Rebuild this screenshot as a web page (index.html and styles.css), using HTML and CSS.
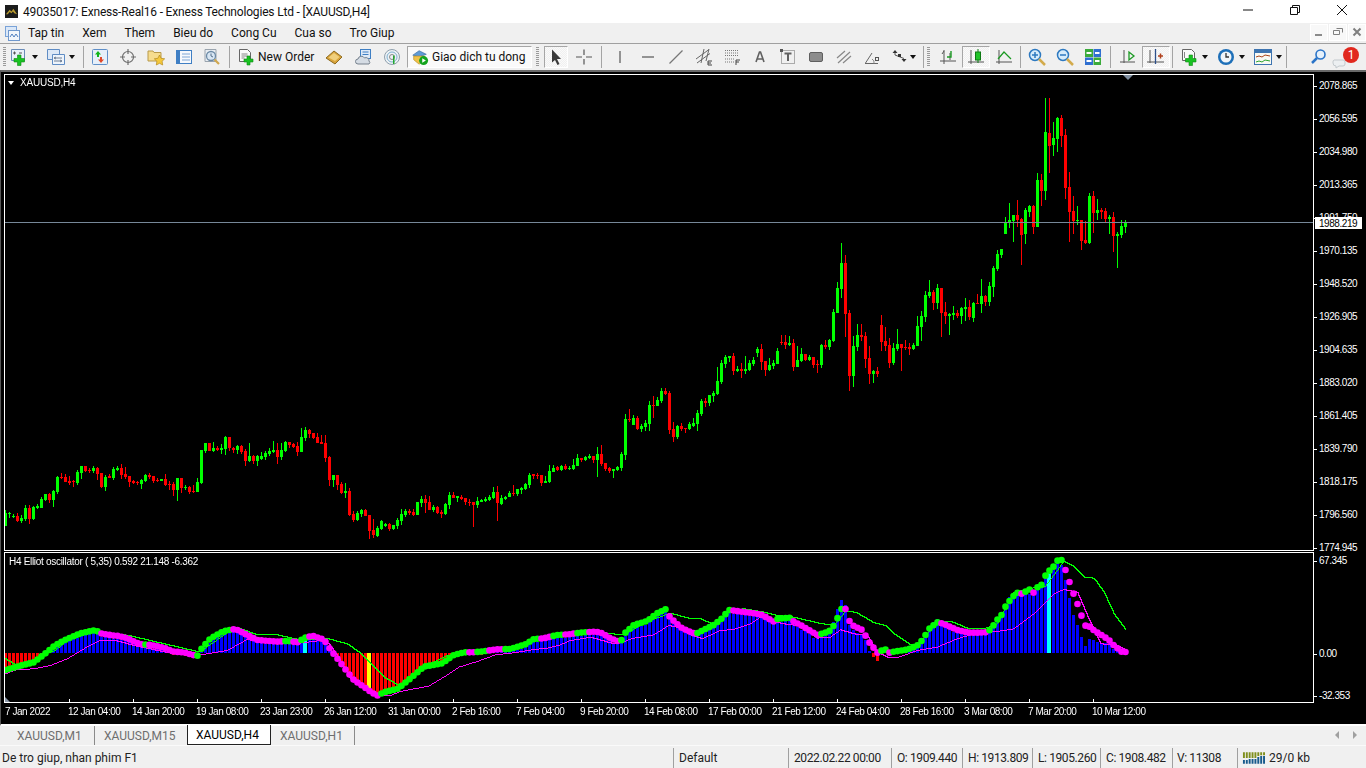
FILE: index.html
```html
<!DOCTYPE html>
<html lang="vi">
<head>
<meta charset="utf-8">
<title>XAUUSD,H4</title>
<link rel="stylesheet" href="styles.css">
</head>
<body>
<div class="app">
  <header class="titlebar">
    <svg class="logo" viewBox="0 0 14 14"><rect width="14" height="14" fill="#1c1c1c"/><path d="M1 10 5 5l2 2 2-3 4 6-3-1-1.500-2L7 9 5 7.500 3 10z" fill="#b89a2e"/></svg>
    <span class="title">49035017: Exness-Real16 - Exness Technologies Ltd - [XAUUSD,H4]</span>
    <div class="winctl">
      <svg viewBox="0 0 12 12"><path d="M1 6h10" stroke="#111"/></svg>
      <svg viewBox="0 0 12 12"><path d="M1.500 3.500h7v7h-7zM3.500 3.500v-2h7v7h-2" fill="none" stroke="#111"/></svg>
      <svg viewBox="0 0 12 12"><path d="M1 1l10 10M11 1 1 11" stroke="#111"/></svg>
    </div>
  </header>

  <nav class="menubar">
    <svg class="docicon" viewBox="0 0 15 15"><rect x=".5" y=".5" width="11" height="10" fill="#dbe8f8" stroke="#7aa3d8"/><rect x="3.500" y="4.500" width="11" height="10" fill="#f2f6fc" stroke="#6f97cc"/><path d="M5 11l2-3 2 3 2-3 2 3" fill="none" stroke="#4f7fc0"/></svg>
    <span>Tap tin</span><span>Xem</span><span>Them</span><span>Bieu do</span><span>Cong Cu</span><span>Cua so</span><span>Tro Giup</span>
    <div class="mdi">
      <i><svg viewBox="0 0 10 10"><path d="M1 8h7" stroke="#8a8a8a" stroke-width="2"/></svg></i>
      <i><svg viewBox="0 0 10 10"><path d="M3.500 1.500h6v4M.5 3.500h6v4h-6z" fill="none" stroke="#7f7f7f"/></svg></i>
      <i><svg viewBox="0 0 10 10"><path d="M1.500 1.500l7 7M8.500 1.500l-7 7" stroke="#7f7f7f" stroke-width="2"/></svg></i>
    </div>
  </nav>

  <div class="toolbar">
    <i class="grip g1"></i>
    <div class="drop dnew"><svg viewBox="0 0 18 18"><path d="M1.500 1.500h13v11h-13z" fill="#e9f0fa" stroke="#6a8cb8"/><path d="M3 5h3M4.500 3.500v3M9 5h3" stroke="#555"/><path d="M7.500 7h3.500v3.500h3.500V14H11v3.500H7.500V14H4v-3.500h3.500z" fill="#19c222" stroke="#0f8a16" stroke-width=".6"/></svg><b class="caret"></b></div>
    <div class="drop dprof"><svg viewBox="0 0 18 18"><path d="M.5 1.500h12v10H.5z" fill="#dce8f7" stroke="#5f8cc4"/><path d="M5.500 6.500h12v10h-12z" fill="#eef4fb" stroke="#5f8cc4"/><path d="M7 10h8M7 13h8M9 9l-2 1 2 1M13 12l2 1-2 1" fill="none" stroke="#6e7f95"/></svg><b class="caret"></b></div>
    <i class="sep"></i>
    <div class="t"><svg viewBox="0 0 18 18"><rect x="1.500" y="1.500" width="15" height="15" rx="1" fill="#e6eff9" stroke="#5f8fc8"/><path d="M7 3 4 6.500h2V9h2V6.500h2z" fill="#12b51c"/><path d="M10 15l3-3.500h-2V9H9v2.500H7z" fill="#e0492a"/></svg></div>
    <div class="t"><svg viewBox="0 0 18 18"><circle cx="9" cy="9" r="5.500" fill="none" stroke="#6e6e6e" stroke-width="1.200"/><path d="M9 1v5M9 12v5M1 9h5M12 9h5" stroke="#6e6e6e" stroke-width="1.200"/></svg></div>
    <div class="t"><svg viewBox="0 0 18 18"><path d="M1 3h5l1 1.500h7V13H1z" fill="#f6dc8e" stroke="#b89a4a"/><path d="M12.500 7l1.600 3.300 3.600.5-2.600 2.500.6 3.700-3.200-1.700-3.200 1.700.6-3.700-2.600-2.500 3.600-.5z" fill="#f4c83c" stroke="#b58a1c" stroke-width=".7"/></svg></div>
    <div class="t"><svg viewBox="0 0 18 18"><rect x="1.500" y="2.500" width="15" height="13" fill="#f6f9fd" stroke="#3f7fc4"/><rect x="2" y="3" width="3" height="12" fill="#3f7fc4"/><path d="M7 6h8M7 9h8M7 12h8" stroke="#7ea7d6"/></svg></div>
    <div class="t"><svg viewBox="0 0 18 18"><path d="M2 1.500h11v12H2z" fill="#e8edf2" stroke="#9aa4ae"/><circle cx="8" cy="8" r="4.500" fill="#d8e6f3" stroke="#6c8aa6" stroke-width="1.300"/><path d="M8 5.500V8l2 1" fill="none" stroke="#55708c"/><path d="M11.500 11.500 16 16" stroke="#d0a850" stroke-width="2.200"/></svg></div>
    <i class="sep"></i>
    <div class="order"><svg viewBox="0 0 18 18"><path d="M2.500 1.500h8l3 3v9h-11z" fill="#fafafa" stroke="#666"/><path d="M4.500 6h6M4.500 8h6M4.500 10h3" stroke="#888"/><path d="M10 8h3v3h3v3h-3v3h-3v-3H7v-3h3z" fill="#19c222" stroke="#0f8a16" stroke-width=".6"/></svg><span>New Order</span></div>
    <div class="t"><svg viewBox="0 0 18 18"><path d="M1 10 9 3l8 6-7 7z" fill="#d9a43c" stroke="#8d6a1f"/><path d="M3.500 9.500 9 5l5.500 4-4.500 4z" fill="#f0cf7c"/></svg></div>
    <div class="t m2"><svg viewBox="0 0 18 18"><rect x="5.500" y="1.500" width="10" height="9" fill="#dfeaf7" stroke="#3f7fc4"/><path d="M7.500 4h6M7.500 6.500h6" stroke="#3f7fc4"/><path d="M3 16a2.500 2.500 0 0 1 0-5 3.500 3.500 0 0 1 6.500-1 3 3 0 0 1 4.500 3 2 2 0 0 1 0 3z" fill="#d5dce4" stroke="#76818d"/></svg></div>
    <div class="t"><svg viewBox="0 0 18 18"><circle cx="9" cy="9" r="7.500" fill="#eef2f5" stroke="#8fa0ad"/><circle cx="9" cy="9" r="5" fill="none" stroke="#7fb0d0"/><circle cx="9" cy="9" r="2.500" fill="none" stroke="#8a8a8a"/><path d="M10 7.500h1.500V16H10z" fill="#23a82d"/></svg></div>
    <div class="auto"><svg viewBox="0 0 20 18"><path d="M2 7l7-5 8 4-8 3z" fill="#5f9bd6" stroke="#35669c" stroke-width=".7"/><path d="M3 8h12v4l-6 5-6-5z" fill="#f0c24a" stroke="#b58c25" stroke-width=".7"/><circle cx="14" cy="13" r="5" fill="#14a41e"/><path d="M12.500 10.500v5l4-2.500z" fill="#fff"/></svg><span>Giao dich tu dong</span></div>
    <i class="grip g2"></i>
    <div class="t active cur"><svg viewBox="0 0 18 18"><path d="M5 1.500v13l3-2.500 2.500 5 2-1-2.500-5h4z" fill="#3a3a3a"/></svg></div>
    <div class="t m2"><svg viewBox="0 0 18 18"><path d="M1 9h6M11 9h6M9 1.500V7M9 11v5.500" stroke="#555" stroke-width="1.200"/></svg></div>
    <i class="sep"></i>
    <div class="t m2"><svg viewBox="0 0 18 18"><path d="M9 3v12" stroke="#555" stroke-width="1.200"/></svg></div>
    <div class="t"><svg viewBox="0 0 18 18"><path d="M3 9h12" stroke="#555" stroke-width="1.200"/></svg></div>
    <div class="t"><svg viewBox="0 0 18 18"><path d="M2.500 15.500l13-13" stroke="#777" stroke-width="1.200"/></svg></div>
    <div class="t"><svg viewBox="0 0 18 18"><path d="M1 11 14 1.500M2 15 15 5.500M6 15l3-14M11 13l3-12" stroke="#666" stroke-width="1" fill="none"/><path d="M13 13h4M13 15h3M13 17h4M13 13v4" stroke="#444" stroke-width="1" fill="none"/></svg></div>
    <div class="t"><svg viewBox="0 0 18 18"><path d="M2 2.500h13M2 5h13M2 7.500h13M2 11h9M2 14h9" stroke="#777" stroke-dasharray="1 1" fill="none"/><path d="M13 12h4M13 14h3M13 12v5" stroke="#444" fill="none"/></svg></div>
    <div class="t"><svg viewBox="0 0 18 18"><path d="M5 14 8.500 4h1L13 14M6.200 11h5.600" fill="none" stroke="#606060" stroke-width="1.600"/></svg></div>
    <div class="t"><svg viewBox="0 0 18 18"><path d="M2.500 2.500h13v13h-13z" fill="none" stroke="#666" stroke-dasharray="1 1"/><rect x="1" y="1" width="3" height="3" fill="#555"/><path d="M5.500 5.500h7M9 5.500V13" stroke="#606060" stroke-width="2" fill="none"/></svg></div>
    <div class="t"><svg viewBox="0 0 18 18"><rect x="2.500" y="4.500" width="13" height="9" rx="1.500" fill="#8c8c8c" stroke="#5f5f5f"/></svg></div>
    <div class="t"><svg viewBox="0 0 18 18"><path d="M2 10 10 3M3 15 15 4M8 15l8-7" stroke="#888" stroke-width="1.200"/></svg></div>
    <div class="t"><svg viewBox="0 0 18 18"><path d="M2 15.500h13M2.500 15 9 5" stroke="#666" fill="none"/><path d="M9 11a4 4 0 0 1 2 4.500" stroke="#888" fill="none"/><rect x="12.500" y="9.500" width="3" height="3" fill="none" stroke="#555"/></svg></div>
    <div class="drop darrow"><svg viewBox="0 0 18 18"><path d="M4 2 6.500 5h-5zM13 14 10.500 11h5z" fill="#333"/><path d="M4 5v2l9 3.500" stroke="#555" fill="none"/><rect x="7" y="6" width="3" height="3" fill="#333"/></svg><b class="caret"></b></div>
    <i class="sep"></i>
    <i class="grip g3"></i>
    <div class="t m2"><svg viewBox="0 0 18 18"><path d="M5 2v14M1 13h16M5 3l-2 3M11 5v7" stroke="#555" fill="none"/><path d="M8 9h4V3" stroke="#1a9a22" stroke-width="1.400" fill="none"/></svg></div>
    <div class="t active"><svg viewBox="0 0 18 18"><path d="M4 2v14M1 14h16" stroke="#555"/><path d="M11 1v14" stroke="#0e7a14"/><rect x="8.500" y="4" width="5" height="8" fill="#22c42a" stroke="#0e7a14"/></svg></div>
    <div class="t"><svg viewBox="0 0 18 18"><path d="M4 2v14M1 14h16" stroke="#555"/><path d="M3 11l6-7 5 5 2 2" fill="none" stroke="#1a9a22" stroke-width="1.200"/></svg></div>
    <i class="sep tight"></i>
    <div class="t"><svg viewBox="0 0 18 18"><circle cx="7" cy="7" r="5.500" fill="#d6ecfb" stroke="#2d79c0" stroke-width="1.500"/><path d="M4 7h6M7 4v6" stroke="#2d79c0" stroke-width="1.500"/><path d="M11 11l6 6" stroke="#d3ab4c" stroke-width="2.500"/></svg></div>
    <div class="t"><svg viewBox="0 0 18 18"><circle cx="7" cy="7" r="5.500" fill="#d6ecfb" stroke="#2d79c0" stroke-width="1.500"/><path d="M4 7h6" stroke="#2d79c0" stroke-width="1.500"/><path d="M11 11l6 6" stroke="#d3ab4c" stroke-width="2.500"/></svg></div>
    <div class="t"><svg viewBox="0 0 18 18"><rect x="1" y="1" width="8" height="8" fill="#3bab3b"/><rect x="9.500" y="1" width="7.500" height="8" fill="#2f6fd0"/><rect x="1" y="9.500" width="8" height="7.500" fill="#2f6fd0"/><rect x="9.500" y="9.500" width="7.500" height="7.500" fill="#3bab3b"/><path d="M2.500 5h5M11 5h4.500M2.500 13h5M11 13h4.500" stroke="#fff" stroke-width="2"/></svg></div>
    <i class="sep wide"></i>
    <div class="t"><svg viewBox="0 0 18 18"><path d="M5 2v13M1 14h15" stroke="#555"/><path d="M10 4v8l5-4z" fill="none" stroke="#1a9a22" stroke-width="1.300"/></svg></div>
    <div class="t active"><svg viewBox="0 0 18 18"><path d="M3 2v13M0 14h17" stroke="#555"/><path d="M8.500 1v15" stroke="#2d4f8a" stroke-width="1.300"/><path d="M11 8h5M13.500 5.500v5" stroke="#b0401c" stroke-width="1.500"/></svg></div>
    <i class="sep tight"></i>
    <div class="drop dtpl"><svg viewBox="0 0 18 18"><path d="M2.500 1.500h9l3 3v8h-12z" fill="#fafafa" stroke="#666"/><path d="M4.500 4v6" stroke="#888"/><path d="M9 7h3.500v3.500H16V14h-3.500v3.500H9V14H5.500v-3.500H9z" fill="#19c222" stroke="#0f8a16" stroke-width=".6"/></svg><b class="caret"></b></div>
    <div class="drop dclock"><svg viewBox="0 0 18 18"><circle cx="9" cy="9" r="8" fill="#1d6fb8"/><circle cx="9" cy="9" r="5.500" fill="#f1f5f8"/><path d="M9 5v4h3" fill="none" stroke="#333" stroke-width="1.300"/></svg><b class="caret"></b></div>
    <div class="drop dchart"><svg viewBox="0 0 18 18"><rect x=".5" y="1.500" width="17" height="15" fill="#f9f9f4" stroke="#3d74b0"/><rect x="1" y="2" width="16" height="3" fill="#3d74b0"/><path d="M2 9l3-1 3 1 3-2 5 1" fill="none" stroke="#a8441c"/><path d="M2 14l3-1 3 1 3-2 5 1" fill="none" stroke="#2da52d"/></svg><b class="caret"></b></div>
    <i class="sep end"></i>
    <div class="t search"><svg viewBox="0 0 18 18"><circle cx="10.500" cy="6.500" r="4.500" fill="#e6f1fb" stroke="#2b74c8" stroke-width="1.600"/><path d="M7 10l-5 5" stroke="#2b74c8" stroke-width="2.500"/></svg></div>
    <div class="t chat"><svg viewBox="0 0 18 18"><path d="M2 9h9a2 2 0 0 1 2 2v2a2 2 0 0 1-2 2H7l-3 2v-2a3 3 0 0 1-3-3v-1a2 2 0 0 1 1-2z" fill="#eceff1" stroke="#c3c9cd"/></svg><b class="badge">1</b></div>
  </div>

  <main class="chart">
    <section class="row main-row">
      <div class="plot main-plot">
        <canvas id="mainCanvas" width="1308" height="475"></canvas>
        <div class="symbol"><b class="tri"></b>XAUUSD,H4</div>
        <b class="shift"></b>
      </div>
      <div class="axis price-axis">
        <span>2078.865</span><span>2056.595</span><span>2034.980</span><span>2013.365</span><span>1991.750</span><span>1970.135</span><span>1948.520</span><span>1926.905</span><span>1904.635</span><span>1883.020</span><span>1861.405</span><span>1839.790</span><span>1818.175</span><span>1796.560</span><span>1774.945</span>
        <em class="current">1988.219</em>
      </div>
    </section>
    <section class="row osc-row">
      <div class="plot osc-plot">
        <canvas id="oscCanvas" width="1308" height="149"></canvas>
        <div class="osc-name">H4 Elliot oscillator ( 5,35) 0.592 21.148 -6.362</div>
        <b class="corner"></b>
      </div>
      <div class="axis osc-axis">
        <span class="o1">67.345</span><span class="o2">0.00</span><span class="o3">-32.353</span>
      </div>
    </section>
    <div class="timeline">
      <span>7 Jan 2022</span><span>12 Jan 04:00</span><span>14 Jan 20:00</span><span>19 Jan 08:00</span><span>23 Jan 23:00</span><span>26 Jan 12:00</span><span>31 Jan 00:00</span><span>2 Feb 16:00</span><span>7 Feb 04:00</span><span>9 Feb 20:00</span><span>14 Feb 08:00</span><span>17 Feb 00:00</span><span>21 Feb 12:00</span><span>24 Feb 04:00</span><span>28 Feb 16:00</span><span>3 Mar 08:00</span><span>7 Mar 20:00</span><span>10 Mar 12:00</span>
    </div>
  </main>

  <div class="tabs">
    <span class="tab t1">XAUUSD,M1</span>
    <span class="tab t2">XAUUSD,M15</span>
    <span class="tab on">XAUUSD,H4</span>
    <span class="tab t4">XAUUSD,H1</span>
    <div class="scroll"><b class="l"></b><b class="r"></b></div>
  </div>

  <footer class="status">
    <span class="c help">De tro giup, nhan phim F1</span>
    <span class="c profile">Default</span>
    <span class="c num time">2022.02.22 00:00</span>
    <span class="c num o">O: 1909.440</span>
    <span class="c num h">H: 1913.809</span>
    <span class="c num l">L: 1905.260</span>
    <span class="c num cl">C: 1908.482</span>
    <span class="c num v">V: 11308</span>
    <span class="c net"><svg viewBox="0 0 24 14"><path d="M1 1h2v6H1zM4 1h2v6H4zM7 1h2v6H7zM10 1h2v6h-2zM13 1h2v6h-2zM16 1h2v4h-2zM19 1h2v3h-2zM22 1h2v3h-2z" fill="#7f8f1e"/><path d="M1 9h2v4H1zM4 9h2v4H4zM7 8h2v5H7zM10 8h2v5h-2zM13 8h2v5h-2zM16 6h2v7h-2zM19 5h2v8h-2zM22 5h2v8h-2z" fill="#175a8c"/></svg>29/0 kb</span>
  </footer>
</div>
<script src="chart.js"></script>
</body>
</html>
```

FILE: styles.css
```css
* { box-sizing: border-box; }
html, body { margin: 0; padding: 0; }
body { width: 1366px; height: 768px; overflow: hidden; background: #f0f0f0; font-family: Roboto, "Noto Sans", sans-serif; font-size: 12px; color: #111; }
.app { display: flex; flex-direction: column; width: 1366px; height: 768px; }
svg { display: block; }

.titlebar { height: 23px; background: #fff; display: flex; align-items: center; padding-left: 5px; flex: none; }
.logo { width: 13px; height: 13px; margin-top: -1px; }
.title { margin-left: 5px; font-size: 12px; color: #111; white-space: nowrap; letter-spacing: -.18px; }
.winctl { margin-left: auto; display: flex; align-items: center; padding-right: 18px; gap: 35px; margin-top: -3px; }
.winctl svg { width: 12px; height: 12px; }

.menubar { height: 21px; background: #f0f0f0; border-bottom: 1px solid #a0a0a0; display: flex; align-items: center; gap: 18px; padding-left: 5px; flex: none; position: relative; white-space: nowrap; }
.docicon { width: 15px; height: 15px; margin-right: -10px; }
.mdi { margin-left: auto; display: flex; gap: 1px; margin-top: -2px; }
.mdi i { width: 18px; height: 17px; background: #f8f8f8; border: 1px solid #fff; display: flex; align-items: center; justify-content: center; }
.mdi svg { width: 10px; height: 10px; }

.toolbar { height: 26px; background: #f0f0f0; display: flex; align-items: center; flex: none; white-space: nowrap; }
.toolbar svg { width: 18px; height: 18px; flex: none; }
.grip { display: block; width: 3px; height: 20px; background: repeating-linear-gradient(#9a9a9a 0 1px, transparent 1px 2px); }
.g1 { margin: 0 2px 0 3px; }
.g2 { margin: 0 5px 0 4px; }
.g3 { margin: 0 2px 0 1px; }
.sep { display: block; width: 1px; height: 22px; background: #a4a4a4; margin: 0 2px 0 3px; }
.sep.tight { margin: 0 2px; }
.sep.wide { margin: 0 3px; }
.sep.end { margin: 0 0 0 3px; }
.t { width: 28px; height: 22px; display: flex; align-items: center; justify-content: center; flex: none; position: relative; }
.m2 { margin-left: 2px; }
.t.active { height: 22px; border: 1px solid; border-color: #a6a6a6 #fff #fff #a6a6a6; background: repeating-conic-gradient(#f0f0f0 0 25%, #fafafa 0 50%) 0 0 / 2px 2px; }
.cur { width: 24px; }
.drop { display: flex; align-items: center; gap: 4px; height: 22px; flex: none; }
.caret { display: block; width: 0; height: 0; border: 3.500px solid transparent; border-top: 4px solid #111; border-bottom: 0; }
.dnew { width: 34px; padding-left: 2px; }
.dprof { width: 35px; margin-left: 3px; padding-left: 2px; }
.darrow { width: 34px; padding-left: 5px; gap: 1px; }
.dtpl { width: 36px; padding-left: 5px; }
.dclock { width: 36px; padding-left: 6px; }
.dchart { width: 36px; padding-left: 7px; }
.order { width: 88px; display: flex; align-items: center; gap: 3px; padding-left: 5px; flex: none; }
.auto { width: 125px; height: 22px; margin-left: 1px; display: flex; align-items: center; gap: 3px; padding-left: 3px; flex: none; background: #fafafa; border: 1px solid; border-color: #a6a6a6 #fff #fff #a6a6a6; }
.search { margin-left: 18px; }
.chat { margin-left: -4px; }
.chat svg { margin-top: 6px; margin-left: -4px; }
.badge { position: absolute; top: 1px; left: 14px; width: 16px; height: 16px; border-radius: 50%; background: #e1281e; color: #fff; font-weight: 400; font-size: 12px; line-height: 16px; text-align: center; }

.chart { flex: none; height: 656px; background: #000; border-top: 2px solid #696969; border-left: 1px solid #555; padding-top: 2px; display: flex; flex-direction: column; border-bottom: 2px solid #fff; }
.row { display: flex; margin-left: 3px; }
.plot { width: 1310px; border: 1px solid #fff; position: relative; flex: none; }
.plot canvas { display: block; }
.main-row { height: 477px; }
.main-plot { height: 477px; }
.osc-row { height: 151px; margin-top: 1px; }
.osc-plot { height: 151px; }

.axis { position: relative; flex: 1; color: #fff; font-family: "Liberation Sans", sans-serif; font-size: 10px; }
.price-axis { display: flex; flex-direction: column; gap: 21px; padding: 6px 0 0 5px; line-height: 12px; }
.price-axis span, .osc-axis span { position: relative; letter-spacing: -.45px; }
.price-axis span::before, .osc-axis span::before { content: ""; position: absolute; left: -5px; top: 6px; width: 3px; height: 1px; background: #fff; }
.current { position: absolute; left: 1px; top: 143px; width: 47px; height: 12px; line-height: 13px; padding-left: 4px; background: #fff; color: #000; font-style: normal; letter-spacing: -.45px; }
.osc-axis { display: flex; flex-direction: column; padding-left: 5px; line-height: 12px; }
.o1 { margin-top: 3px; }
.o2 { margin-top: 81px; }
.o3 { margin-top: 30px; }

.symbol { position: absolute; left: 3px; top: 2px; color: #fff; font-family: "Liberation Sans", sans-serif; font-size: 10px; line-height: 12px; display: flex; align-items: center; gap: 6px; letter-spacing: -.2px; }
.tri { display: block; width: 0; height: 0; border: 3.500px solid transparent; border-top: 4px solid #fff; border-bottom: 0; }
.shift { position: absolute; left: 1118px; top: 0; width: 0; height: 0; border: 5px solid transparent; border-top: 5px solid #7f8ea0; border-bottom: 0; }
.osc-name { position: absolute; left: 4px; top: 3px; color: #fff; font-family: "Liberation Sans", sans-serif; font-size: 10px; line-height: 12px; white-space: nowrap; letter-spacing: -.3px; }
.corner { position: absolute; left: 0; bottom: 0; width: 0; height: 0; border-left: 5px solid #8a97a8; border-top: 5px solid transparent; }

.timeline { display: flex; padding: 3px 0 0 3px; color: #fff; font-family: "Liberation Sans", sans-serif; font-size: 10px; line-height: 12px; height: 18px; }
.timeline span { width: 64px; flex: none; white-space: nowrap; position: relative; letter-spacing: -.45px; }
.timeline span:first-child { width: 64px; padding-left: 1px; }
.timeline span:not(:first-child)::before { content: ""; position: absolute; left: 1px; top: -7px; width: 1px; height: 3px; background: #fff; }

.tabs { height: 19px; background: #f0f0f0; display: flex; align-items: flex-start; flex: none; padding-left: 5px; position: relative; color: #6e6e6e; }
.tab { display: flex; align-items: center; height: 19px; padding-top: 1px; white-space: nowrap; }
.t1 { padding-left: 12px; width: 90px; border-right: 1px solid #8a8a8a; }
.t2 { padding-left: 9px; width: 92px; }
.on { width: 84px; height: 20px; margin-top: -1px; padding-left: 8px; background: #fff; color: #000; border: 1px solid #222; border-top: 0; }
.t4 { padding-left: 9px; width: 84px; border-right: 1px solid #8a8a8a; }
.scroll { margin-left: auto; display: flex; gap: 14px; padding: 5px 9px 0 0; }
.scroll b { display: block; width: 0; height: 0; border-top: 4px solid transparent; border-bottom: 4px solid transparent; }
.scroll .l { border-right: 4px solid #a0a0a0; }
.scroll .r { border-left: 4px solid #a0a0a0; }

.status { flex: 1; background: #f0f0f0; border-top: 1px solid #fafafa; padding-top: 1px; display: flex; align-items: center; white-space: nowrap; color: #222; }
.c { display: flex; align-items: center; height: 20px; padding-left: 5px; border-left: 1px solid #a0a0a0; flex: none; overflow: hidden; }
.num { letter-spacing: -.4px; }
.help { width: 673px; padding-left: 2px; border-left: 0; }
.profile { width: 115px; }
.time { width: 103px; }
.o { width: 71px; }
.h { width: 70px; }
.l { width: 68px; }
.cl { width: 72px; }
.v { width: 65px; padding-left: 4px; }
.net { flex: 1; padding-left: 4px; gap: 4px; }
.net svg { width: 23px; height: 14px; flex: none; }
```

FILE: chart.js
```js
// Candle lists: colour + body top, body bottom, high, low, in 3x crop coordinates.
const SEGMENTS = [
  { start: 5, off: 420, d: "G278,318,270,318 G279,281,276,294 G287,290,282,294 R288,303,279,305 G293,303,285,309 G264,297,255,303 R264,297,255,312 G261,297,258,300 G258,264,252,268 G237,264,231,264 G222,240,222,243 R222,240,219,249 G213,240,210,261 G171,216,168,222 R172,174,159,177 R171,186,162,186 R183,189,168,195 R184,187,180,201 G156,189,150,195 G138,159,138,177 R138,153,138,156 R150,152,144,159 G144,153,138,159 R144,162,141,180 R159,201,159,204 G171,201,165,213 R168,174,162,174 G147,174,141,180 G144,150,138,153 R144,165,132,177 R162,171,141,177 R168,186,168,201 R183,189,180,192 R186,190,183,195 G180,192,177,207 G165,183,162,186 R165,171,159,177 R168,183,168,189 R180,183,174,186 G177,183,177,183 R177,195,162,198 R193,195,183,210 R192,210,186,228 G174,210,174,243 R174,204,174,219 G201,204,195,210 R201,216,198,222 R213,216,195,219 G186,216,174,216 G90,189,90,192 G69,93,69,99 R69,93,69,93 G84,93,66,96 R84,90,78,93 G84,90,72,102 G51,87,48,105 R51,84,51,93 R84,90,81,99 G78,90,75,102 R78,96,75,102 R93,123,87,138 G108,123,69,126 R108,123,105,132 G108,123,105,138 G108,117,96,120 G99,111,93,120 G93,102,84,108 G90,96,63,99 R90,111,69,132 G90,111,69,120 G66,93,63,96 R66,75,66,84 R72,81,69,84 R78,96,66,108 G51,96,24,96 G30,54,21,63 R30,42,27,54 R39,54,39,57 R51,69,39,69 R66,72,45,72 R69,114,45,126 R111,180,108,198 G165,180,165,201 R165,195,165,210 R192,219,186,222 G213,219,189,234 R213,285,204,288 R282,300,273,306 G279,300,273,303 G270,282,267,291 R270,288,267,288 R285,333,285,357 R330,345,297,354 G324,348,318,351 G303,327,300,330 G312,317,309,321 R312,327,309,333" },
  { start: 393, off: 330, d: "G585,597,585,600 G570,588,564,597 G552,573,537,585 G543,555,537,561 R543,549,537,555 R546,555,537,558 G516,555,516,555 G507,519,498,531 R507,519,495,549 R516,540,498,540 G531,540,525,546 R531,549,528,552 R546,552,540,564 G522,552,519,555 G495,525,486,537 R495,504,486,504 G498,504,498,516 R501,507,495,510 R504,516,504,525 R516,519,507,528 R516,525,516,591 G513,525,501,534 G510,516,507,516 G507,513,501,516 G501,510,495,513 G486,504,471,507 R486,519,468,573 G504,522,495,525 G501,507,498,510 G489,501,483,501 R489,492,465,498 G477,492,477,498 G474,480,471,492 G462,477,459,480 G435,465,429,474 R432,438,432,447 R435,438,429,447 R435,459,435,468 G453,459,438,459 G423,456,405,459 G414,426,405,426 R411,420,408,423 G408,420,405,423 R408,417,402,420 G414,417,408,420 G405,417,387,420 G384,408,372,408 R384,390,384,396 G381,390,378,393 G378,384,372,387 R378,390,378,399 G372,390,351,441 R372,402,345,408 R399,417,399,423 R414,423,411,429 G417,423,417,444 G411,420,408,423 G372,414,366,423 G267,375,252,390 R267,270,237,276 G264,285,255,285 R264,297,258,300 G288,297,282,306 G279,291,270,303 G225,282,213,303 R225,228,198,264 G210,228,201,228 G183,213,174,219 R183,192,174,195 R189,300,183,312 R297,321,276,336 G288,321,285,327 R288,297,279,303 R294,297,294,309 G282,297,276,300 G279,288,264,291 G249,282,240,303 G213,252,207,258 R213,219,204,231 G195,219,195,228 G189,198,183,216 G153,192,111,195 G99,156,90,162 G81,102,75,114 G78,84,78,96 R78,123,69,135 G117,123,108,126 R117,123,99,144 G117,123,78,132 G99,120,90,123 G90,102,81,108 G57,69,51,81 R57,96,42,120 R93,120,93,138 G105,120,84,123 G99,108,90,117 G63,102,54,102" },
  { start: 781, off: 230, d: "R336,339,315,345 R336,345,315,357 G339,346,318,348 R339,411,327,423 G390,411,348,411 G372,393,354,396 R372,390,372,393 G381,390,375,393 R381,405,381,414 R402,405,390,429 G345,405,342,414 R345,351,330,357 G330,351,327,360 G246,333,237,336 G174,249,156,249 G99,177,39,204 R99,252,75,321 R249,438,240,483 G348,438,318,471 G315,351,282,363 R315,321,282,333 R318,387,306,414 R384,432,348,462 G423,432,420,459 R423,432,411,441 R285,336,255,363 R333,348,291,363 R345,399,324,414 G354,399,339,405 G342,357,297,363 R342,354,342,423 R351,354,330,360 R351,357,339,375 G345,357,339,360 G288,348,258,348 G258,291,243,333 G195,261,183,276 G186,198,150,204 R186,219,180,240 G174,219,162,237 R174,249,174,321 R246,258,216,282 G252,258,249,315 G249,255,228,270 R249,258,240,264 G234,258,231,282 G231,237,204,273 R231,261,210,270 G219,264,216,276 R219,222,192,222 G198,222,147,249 R198,216,195,228 G168,216,156,228 G114,171,108,201 G72,117,60,123 G57,75,57,84" },
  { start: 1005, off: 90, d: "G397,432,381,432 G390,399,339,414 G375,393,375,456 R375,390,330,411 R387,435,384,525 G360,432,354,462 G348,366,345,381 R348,411,345,432 G270,411,249,411 R270,303,252,348 G126,303,24,330 R129,168,24,249 G144,165,96,198 G84,147,81,186 R84,138,75,171 R135,294,117,327 R291,366,246,456 R363,393,318,432 G390,393,348,405 R390,453,390,480 R450,459,393,462 G318,459,309,462 R318,369,303,429 G360,369,327,390 R360,366,354,387 R363,387,354,399 G381,387,375,432 R381,438,366,486 G432,438,426,534 G408,435,390,444 G396,411,390,429" }
];

// Oscillator curves: crop x offset + "x,y[,colour]" in 3x crop coordinates; y origin is 545.
function curve(parts) {
  const out = [];
  parts.forEach(([off, text]) => text.trim().split(/\s+/).forEach((p) => {
    const [x, y, col] = p.split(",");
    out.push({ x: off + x / 3, y: 545 + y / 3, col });
  }));
  return out;
}

const DOTS = curve([
  [0, "15,375,g 60,362,g 100,352,g 135,325,g 165,300,g 200,282,g 240,265,g 285,255,g 300,265,m 340,272,m 345,272,g 355,273,m 380,280,m 420,298,m 432,298,g 450,300,m 490,308,m 520,320,m 550,322,m 585,332,m 592,332,g 600,315,g 630,280,g 670,258,g 705,252,m 740,270,m 770,285,m 830,290,m 860,288,g 890,292,m 915,278,g 935,272,m 965,282,m 980,295,m 988,312,m 1010,340,m 1040,380,m 1060,405,m 1085,422,m 1110,440,m 1130,452,m 1150,442,g 1190,432,g"],
  [400, "0,425,g 30,400,g 70,365,g 125,355,g 160,330,g 190,322,g 215,322,m 240,320,g 290,313,m 330,312,g 375,298,g 400,282,g 430,280,m 470,270,g 505,268,m 540,263,g 580,260,m 600,262,m 630,280,m 650,288,m 665,285,g 675,263,g 700,240,g 740,228,g 770,205,g 795,193,g 805,212,m 820,228,m 845,250,m 885,267,m 895,262,g 940,240,g 965,220,g 985,195,g 1000,197,m 1060,205,m 1085,210,m 1120,230,m 1130,222,g 1170,218,g 1180,230,m"],
  [800, "0,240,m 25,255,m 50,270,m 65,266,g 85,260,g 98,245,g 110,222,g 122,192,g 135,192,m 147,228,m 158,242,m 183,254,m 195,272,m 207,293,m 219,308,m 231,323,m 243,317,g 255,314,g 267,323,m 280,320,g 320,314,g 350,302,g 363,288,g 375,270,g 385,252,g 410,232,g 425,235,m 470,255,m 505,263,m 530,263,m 555,262,m 568,255,g 580,240,g 592,222,g 603,210,g 615,185,g 627,168,g 640,152,g 650,143,g 662,147,m 675,140,g 690,132,g 699,143,m 710,127,g 722,122,g 735,92,g 747,77,g 759,65,g 771,47,g 783,45,g 795,75,m 807,111,m 819,146,m 831,177,m 843,212,m 855,242,m 867,245,m 879,255,m 891,263,m 903,270,m 915,278,m 927,287,m 939,300,m 951,310,m 963,320,m 975,321,m"]
]);

const HIST_END = curve([
  [800, "0,255 12,258 24,263 36,278 48,282 60,275 72,275 84,270 96,240 108,200 124,162 136,180 148,245 160,255 172,265 184,268 196,285 208,320 220,338 232,350 244,324 280,315 340,312 352,300 364,285 376,265 388,240 400,230 412,222 430,240 460,262 500,272 560,265 572,255 584,238 596,218 608,195 620,165 632,150 644,140 660,145 690,148 700,155 712,125 730,100 747,85 759,75 771,55 783,60 795,105 807,160 819,210 831,240 843,275 855,303 867,283 879,285 891,290 903,297 915,295 927,300 940,312 951,318 963,323 975,323"]
]);

const GREEN_LINE = curve([
  [0, "15,340 60,368 100,350 130,325 165,315 200,285 285,258 385,270 440,283 590,318 600,318 700,248 720,250 770,268 830,268 905,285 975,278 1040,295 1075,320 1105,350 1150,395 1195,420"],
  [400, "0,425 70,365 140,330 190,322 330,312 400,282 470,270 580,258 660,268 680,263 740,228 810,203 870,220 900,220 940,238 985,195 1030,190 1080,198 1130,210 1180,215"],
  [800, "0,220 50,232 100,240 135,198 165,200 220,232 255,240 280,265 340,305 355,295 410,228 450,227 505,250 550,250 590,235 640,140 680,130 735,122 790,48 815,60 850,95 880,98 910,140 940,205 975,252"]
]);

const MAGENTA_LINE = curve([
  [0, "15,385 50,372 100,370 150,360 200,340 250,310 298,285 345,285 400,300 520,325 600,328 680,315 740,282 780,290 880,295 960,285 985,295 1010,330 1050,400 1090,425 1130,450 1170,450"],
  [400, "0,438 40,430 85,422 130,395 175,365 230,348 285,328 340,322 400,312 440,308 480,298 510,285 570,275 640,295 665,290 700,278 760,268 805,240 830,245 870,268 905,280 960,255 1000,252 1050,235 1080,215 1110,225 1150,235 1190,240"],
  [800, "0,240 50,278 90,275 120,253 160,265 200,270 230,320 260,335 295,335 350,315 410,305 470,280 520,265 590,258 640,250 700,205 760,145 790,132 830,140 860,210 900,295 945,298 975,312"]
]);

function at(points, x) {
  if (x <= points[0].x) return points[0].y;
  for (let i = 1; i < points.length; i++) {
    if (x <= points[i].x) {
      const a = points[i - 1], b = points[i];
      return a.y + (b.y - a.y) * (x - a.x) / ((b.x - a.x) || 1);
    }
  }
  return points[points.length - 1].y;
}

function nearest(points, x) {
  let best = points[0];
  points.forEach((p) => { if (Math.abs(p.x - x) < Math.abs(best.x - x)) best = p; });
  return best;
}

function drawCandles() {
  const ctx = document.getElementById("mainCanvas").getContext("2d");
  ctx.translate(-5, -75);
  SEGMENTS.forEach((seg) => {
    seg.d.split(" ").forEach((item, i) => {
      const [top, bot, hi, lo] = item.slice(1).split(",").map((v) => Math.round(seg.off + v / 3));
      const c = seg.start + i * 4;
      ctx.fillStyle = item[0] === "G" ? "#00ff00" : "#ff0000";
      ctx.fillRect(c, hi, 1, Math.max(lo - hi, 1));
      ctx.fillRect(c - 1, top, 3, Math.max(bot - top, 1));
    });
  });
  ctx.fillStyle = "#778899";
  ctx.fillRect(5, 222, 1308, 1);
}

function pixelLine(ctx, points, color) {
  ctx.fillStyle = color;
  const first = Math.ceil(points[0].x);
  const last = Math.floor(points[points.length - 1].x);
  let prev = Math.round(at(points, first));
  for (let x = first; x <= last; x++) {
    const y = Math.round(at(points, x));
    ctx.fillRect(x, Math.min(prev, y), 1, Math.abs(prev - y) || 1);
    if (y !== prev) ctx.fillRect(x, y, 1, 1);
    prev = y;
  }
}

function drawOscillator() {
  const ctx = document.getElementById("oscCanvas").getContext("2d");
  ctx.translate(-5, -553);
  const BASE = 653;
  const special = { 305: "#00ffff", 369: "#ffff00", 1049: "#00ffff" };
  for (let c = 5; c <= 1125; c += 4) {
    let y = c >= 800 ? at(HIST_END, c) : at(DOTS, c);
    if (c < 800 && y < BASE) y += 3;
    y = Math.round(y);
    const height = Math.abs(y - BASE);
    if (!height) continue;
    ctx.fillStyle = special[c] || (y < BASE ? "#0000ff" : "#ff0000");
    ctx.fillRect(special[c] ? c - 2 : c - 1, Math.min(y, BASE), special[c] ? 4 : 3, height);
  }
  pixelLine(ctx, GREEN_LINE, "#00ff00");
  pixelLine(ctx, MAGENTA_LINE, "#ff00ff");
  for (let c = 5; c <= 1125; c += 4) {
    const col = nearest(DOTS, c).col;
    ctx.fillStyle = col === "g" ? "#00ff00" : "#ff00ff";
    ctx.beginPath();
    ctx.arc(c + 0.5, at(DOTS, c), 3.3, 0, Math.PI * 2);
    ctx.fill();
  }
}

drawCandles();
drawOscillator();
```
